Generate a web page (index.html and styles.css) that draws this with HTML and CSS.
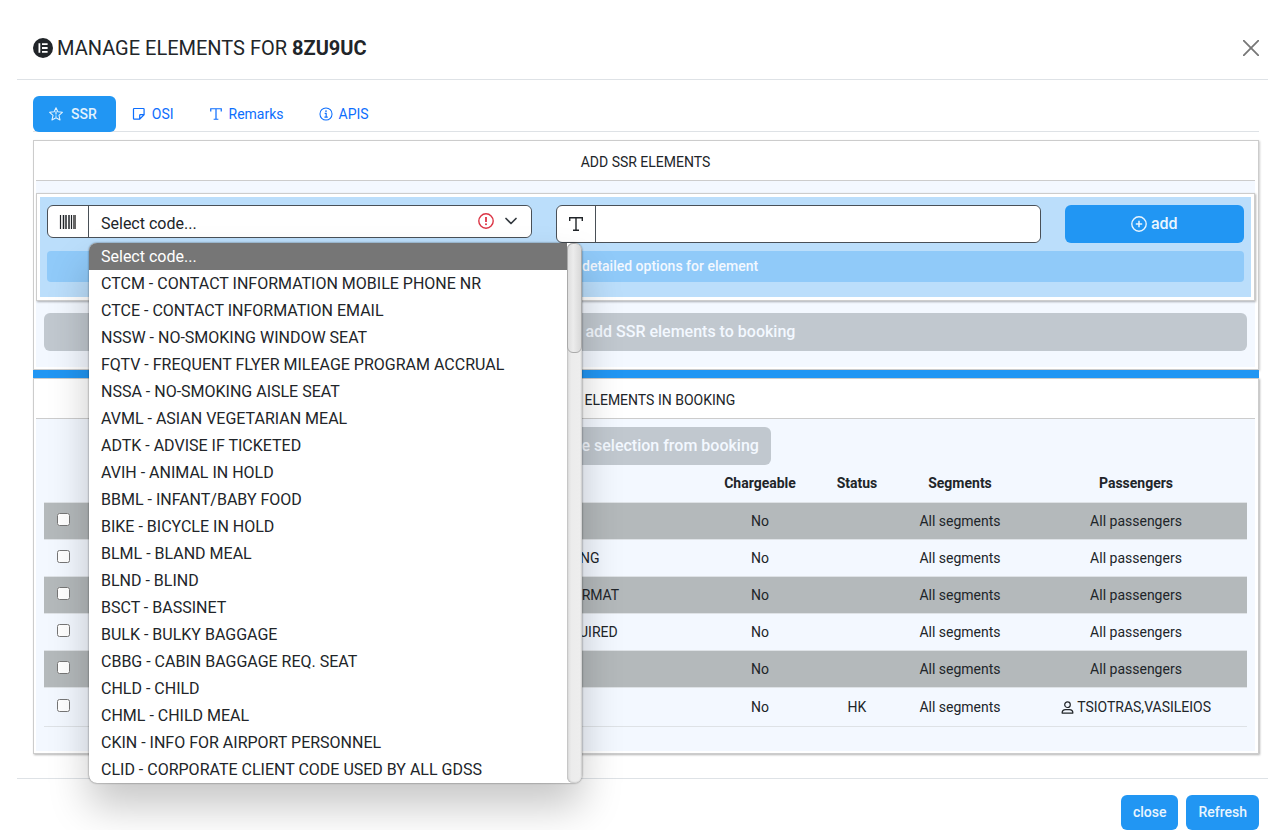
FILE: index.html
```
<!DOCTYPE html>
<html lang="en">
<head>
  <meta charset="UTF-8">
  <title>Manage elements</title>
  <link rel="stylesheet" href="styles.css">
</head>
<body>

  <div class="modal">
    <header class="modal-header">
      <h1 class="modal-title">
        <svg class="icon-title" viewBox="0 0 20 20"><circle cx="10" cy="10" r="10" fill="#212529"/><path d="M6.4 5.2v9.6M9 6.2h5.6M9 10h5.600M9 13.800h5.600" stroke="#fff" stroke-width="1.800" fill="none"/></svg>
        <span>MANAGE ELEMENTS FOR <b>8ZU9UC</b></span>
      </h1>
      <button class="btn-close" type="button" aria-label="Close">
        <svg viewBox="0 0 16 16"><path d="M.7.7l14.6 14.6M15.3.7L.7 15.3" stroke="#777" stroke-width="1.8" stroke-linecap="round"/></svg>
      </button>
    </header>

    <main class="modal-body">
      <nav class="tabs">
        <a class="tab active" href="#ssr">
          <svg class="icon" viewBox="0 0 16 16"><path d="M8 .8l2.100 4.700 5.200.6-3.900 3.500 1.200 5.200L8 12.200l-4.600 2.600 1.200-5.200L.7 6.100l5.200-.6z" fill="none" stroke="currentColor" stroke-width="1.200" stroke-linejoin="round"/><path d="M8 4.800v3.800M8 9.800v1.400" stroke="currentColor" stroke-width="1.400"/></svg>
          SSR
        </a>
        <a class="tab" href="#osi">
          <svg class="icon" viewBox="0 0 16 16"><path d="M2.500 1.700h10.500q.8 0 .8.800v6.300l-5 5H2.500q-.8 0-.8-.8V2.500q0-.8.800-.8zM8.800 13.800V9.600q0-.8.800-.8h4.200" fill="none" stroke="currentColor" stroke-width="1.400"/></svg>
          OSI
        </a>
        <a class="tab" href="#remarks">
          <svg class="icon" viewBox="0 0 16 16"><path d="M2 5V2h12v3M8 2v12M5.300 14h5.400" fill="none" stroke="currentColor" stroke-width="1.400"/></svg>
          Remarks
        </a>
        <a class="tab" href="#apis">
          <svg class="icon" viewBox="0 0 16 16"><circle cx="8" cy="8" r="6.900" fill="none" stroke="currentColor" stroke-width="1.200"/><circle cx="8" cy="4.700" r="1" fill="currentColor"/><path d="M6.500 7.300h1.700v4.300M6.200 11.600h3.800" fill="none" stroke="currentColor" stroke-width="1.300"/></svg>
          APIS
        </a>
      </nav>

      <section class="panel">
        <div class="panel-inner">
          <h2 class="panel-title">ADD SSR ELEMENTS</h2>

          <div class="add-box">
            <div class="add-form">
              <div class="group code-group">
                <label class="group-label" for="code" aria-label="Code">
                  <svg class="icon-code" viewBox="0 0 18 16"><path d="M1.500 1v14M12.500 1v14" stroke="#212529" stroke-width="1.200"/><path d="M4.500 1v14M7 1v14M10 1v14" stroke="#212529" stroke-width="1.500"/><path d="M15.500 1v14" stroke="#666" stroke-width="3"/></svg>
                </label>
                <select id="code" class="code-select">
                  <option>Select code...</option>
                </select>
                <span class="select-marks">
                  <svg class="icon-alert" viewBox="0 0 16 16"><circle cx="8" cy="8" r="7.200" fill="none" stroke="#dc3545" stroke-width="1.400"/><path d="M8 4v5" stroke="#dc3545" stroke-width="1.800"/><circle cx="8" cy="11.300" r="1" fill="#dc3545"/></svg>
                  <svg class="icon-arrow" viewBox="0 0 12 8"><path d="M1 1.500l5 5 5-5" fill="none" stroke="#343a40" stroke-width="1.700" stroke-linecap="round" stroke-linejoin="round"/></svg>
                </span>

                <!-- open list of codes -->
                <div class="menu">
                  <ul class="menu-list" role="listbox" aria-label="Codes">
                    <li class="selected" role="option" aria-selected="true">Select code...</li>
                    <li role="option">CTCM - CONTACT INFORMATION MOBILE PHONE NR</li>
                    <li role="option">CTCE - CONTACT INFORMATION EMAIL</li>
                    <li role="option">NSSW - NO-SMOKING WINDOW SEAT</li>
                    <li role="option">FQTV - FREQUENT FLYER MILEAGE PROGRAM ACCRUAL</li>
                    <li role="option">NSSA - NO-SMOKING AISLE SEAT</li>
                    <li role="option">AVML - ASIAN VEGETARIAN MEAL</li>
                    <li role="option">ADTK - ADVISE IF TICKETED</li>
                    <li role="option">AVIH - ANIMAL IN HOLD</li>
                    <li role="option">BBML - INFANT/BABY FOOD</li>
                    <li role="option">BIKE - BICYCLE IN HOLD</li>
                    <li role="option">BLML - BLAND MEAL</li>
                    <li role="option">BLND - BLIND</li>
                    <li role="option">BSCT - BASSINET</li>
                    <li role="option">BULK - BULKY BAGGAGE</li>
                    <li role="option">CBBG - CABIN BAGGAGE REQ. SEAT</li>
                    <li role="option">CHLD - CHILD</li>
                    <li role="option">CHML - CHILD MEAL</li>
                    <li role="option">CKIN - INFO FOR AIRPORT PERSONNEL</li>
                    <li role="option">CLID - CORPORATE CLIENT CODE USED BY ALL GDSS</li>
                  </ul>
                  <div class="menu-scroll"><div class="menu-thumb"></div></div>
                </div>
              </div>

              <div class="group">
                <label class="group-label" for="text" aria-label="Text">
                  <svg class="icon-text" viewBox="0 0 16 16"><path d="M1.700 5V1.800h12.600V5M8 1.800v12.400M5 14.200h6" fill="none" stroke="#212529" stroke-width="1.400"/></svg>
                </label>
                <input id="text" class="text-input" type="text">
              </div>

              <button class="btn add-btn" type="button">
                <svg class="icon-add" viewBox="0 0 16 16"><circle cx="8" cy="8" r="7.200" fill="none" stroke="currentColor" stroke-width="1.400"/><path d="M8 4.800v6.400M4.800 8h6.400" stroke="currentColor" stroke-width="1.500"/></svg>
                add
              </button>
            </div>
            <button class="btn options-btn" type="button" disabled>Display detailed options for element</button>
          </div>

          <button class="btn booking-btn" type="button" disabled>confirm and add SSR elements to booking</button>
        </div>
      </section>

      <section class="panel booking-panel">
        <div class="panel-inner">
          <h2 class="panel-title">SSR ELEMENTS IN BOOKING</h2>
          <button class="btn remove-btn" type="button" disabled>Remove selection from booking</button>
          <table class="elements">
            <thead>
              <tr>
                <th class="col-check"></th>
                <th class="col-code">Code</th>
                <th>Text</th>
                <th class="col-charge">Chargeable</th>
                <th class="col-status">Status</th>
                <th class="col-segments">Segments</th>
                <th class="col-passengers">Passengers</th>
              </tr>
            </thead>
            <tbody>
              <tr><td><input type="checkbox" aria-label="Select element 1"></td><td>OTHS</td><td>INFO</td><td>No</td><td></td><td>All segments</td><td>All passengers</td></tr>
              <tr><td><input type="checkbox" aria-label="Select element 2"></td><td>OTHS</td><td>SUBJECT TO CANCELLING</td><td>No</td><td></td><td>All segments</td><td>All passengers</td></tr>
              <tr><td><input type="checkbox" aria-label="Select element 3"></td><td>OTHS</td><td>CONTACT IN REQUIRED FORMAT</td><td>No</td><td></td><td>All segments</td><td>All passengers</td></tr>
              <tr><td><input type="checkbox" aria-label="Select element 4"></td><td>OTHS</td><td>PASSENGER DETAILS REQUIRED</td><td>No</td><td></td><td>All segments</td><td>All passengers</td></tr>
              <tr><td><input type="checkbox" aria-label="Select element 5"></td><td>OTHS</td><td>INFO</td><td>No</td><td></td><td>All segments</td><td>All passengers</td></tr>
              <tr>
                <td><input type="checkbox" aria-label="Select element 6"></td><td>CTCE</td><td>EMAIL</td><td>No</td><td>HK</td><td>All segments</td>
                <td><svg class="icon-user" viewBox="0 0 14 14"><circle cx="7" cy="4" r="3" fill="none" stroke="#212529" stroke-width="1.300"/><path d="M1.200 13q0-3.800 3.800-3.800h4q3.800 0 3.800 3.800z" fill="none" stroke="#212529" stroke-width="1.300" stroke-linejoin="round"/></svg> TSIOTRAS,VASILEIOS</td>
              </tr>
            </tbody>
          </table>
        </div>
      </section>
    </main>

    <footer class="modal-footer">
      <button class="btn btn-small" type="button">close</button>
      <button class="btn btn-small" type="button">Refresh</button>
    </footer>
  </div>

</body>
</html>
```
FILE: styles.css
```
* {
  box-sizing: border-box;
}

body {
  margin: 0;
  padding: 17px 0 0 17px;
  background: #fff;
  color: #212529;
  font-family: Roboto, "Liberation Sans", sans-serif;
  font-size: 14px;
  line-height: 21px;
}

h1, h2 {
  margin: 0;
  font-weight: 400;
}

svg {
  flex: none;
}

.modal-header {
  display: flex;
  align-items: center;
  justify-content: space-between;
  padding: 16px 9px 16px 16px;
  border-bottom: 1px solid #dee2e6;
}

.modal-title {
  display: flex;
  align-items: center;
  gap: 4px;
  font-size: 20px;
  line-height: 30px;
}

.modal-title b {
  font-weight: 700;
}

.icon-title {
  width: 20px;
  height: 20px;
}

.btn-close {
  display: flex;
  padding: 0;
  border: none;
  background: none;
  cursor: pointer;
}

.btn-close svg {
  width: 16px;
  height: 16px;
}

.modal-body {
  padding: 16px 9px 24px 16px;
}

/* tabs */
.tabs {
  display: flex;
  margin-bottom: 8px;
  box-shadow: inset 0 -1px #dee2e6;
}

.tab {
  display: flex;
  align-items: center;
  gap: 6px;
  padding: 8px 19px 8px 16px;
  border-radius: 6px;
  color: #0d6efd;
  line-height: 20px;
  text-decoration: none;
}

.tab.active {
  gap: 8px;
  background: #2196f3;
  color: #e3f2fd;
  font-weight: 500;
}

.icon {
  width: 14px;
  height: 14px;
}

/* panels */
.panel {
  padding: 2px 3px 2px 2px;
  border: 1px solid #ccc;
  box-shadow: 1px 1px 2px rgba(0, 0, 0, 0.2);
}

.panel-inner {
  padding-bottom: 16px;
  background: #f3f8ff;
}

.panel-title {
  padding: 9px 0 7px;
  border-bottom: 1px solid #ccc;
  background: #fff;
  font-size: 14px;
  line-height: 21px;
  text-align: center;
}

.booking-panel {
  margin-top: 8px;
  box-shadow: 0 -8px #2196f3, 1px 1px 2px rgba(0, 0, 0, 0.3);
}

.booking-panel .panel-inner {
  padding: 0 8px 24px;
}

.booking-panel .panel-title {
  margin: 0 -8px 8px;
}

.add-box {
  margin: 12px 0;
  padding: 11px 10px 18px;
  border: 1px solid #ccc;
  background: #bbdefb;
  box-shadow: inset 0 0 0 3px #fff, 1px 1px 2px rgba(0, 0, 0, 0.3);
}

.add-form {
  display: grid;
  grid-template-columns: repeat(12, 1fr);
  gap: 24px;
  align-items: start;
  margin-bottom: 8px;
}

.group {
  display: flex;
  grid-column: span 5;
  border: 1px solid #495057;
  border-radius: 6px;
  background: #fff;
}

.code-group {
  position: relative;
}

.group-label {
  display: flex;
  align-items: center;
  justify-content: center;
  width: 39px;
  border-right: 1px solid #495057;
}

.code-group .group-label {
  width: 41px;
}

.icon-code {
  width: 18px;
  height: 16px;
}

.icon-text {
  width: 16px;
  height: 16px;
}

.code-select,
.text-input {
  flex: 1;
  min-width: 0;
  height: 36px;
  padding: 4px 12px 0;
  border: none;
  border-radius: 6px;
  outline: none;
  background: #fff;
  color: #212529;
  font: 16px/24px Roboto, "Liberation Sans", sans-serif;
}

.code-select {
  height: 31px;
  appearance: none;
}

.select-marks {
  position: absolute;
  top: 7px;
  right: 14px;
  display: flex;
  align-items: center;
  gap: 11px;
  pointer-events: none;
}

.icon-alert {
  width: 16px;
  height: 16px;
}

.icon-arrow {
  width: 12px;
  height: 8px;
}

/* open code list */
.menu {
  position: absolute;
  z-index: 10;
  top: 37px;
  left: 41px;
  display: flex;
  width: 493px;
  overflow: hidden;
  border-radius: 8px;
  background: #fff;
  box-shadow: 0 0 2px rgba(0, 0, 0, 0.6), 0 24px 40px rgba(0, 0, 0, 0.22);
}

.menu-list {
  flex: 1;
  margin: 0;
  padding: 0;
  list-style: none;
  font-size: 16px;
  line-height: 27px;
}

.menu-list li {
  padding-left: 12px;
}

.menu-list .selected {
  background: #767676;
  color: #fff;
}

.menu-scroll {
  width: 15px;
  border-radius: 6px;
  background: linear-gradient(90deg, #dcdcdc, #ececec 30%, #eee);
  box-shadow: inset 0 0 2px #888;
}

.menu-thumb {
  height: 110px;
  border: 1px solid #aaa;
  border-radius: 6px;
  background: linear-gradient(90deg, #dedede, #ececec 40%, #d8d8d8);
}

/* buttons */
.btn {
  padding: 7px 12px;
  border: none;
  border-radius: 6px;
  background: #2196f3;
  color: #e9f5fe;
  font: 500 16px/24px Roboto, "Liberation Sans", sans-serif;
  cursor: pointer;
}

.btn:disabled {
  background: #c1c8cf;
  color: #f3f8ff;
  cursor: default;
}

.add-btn {
  display: flex;
  grid-column: span 2;
  align-items: center;
  justify-content: center;
  gap: 4px;
}

.icon-add {
  width: 16px;
  height: 16px;
}

.options-btn {
  display: block;
  width: 100%;
  padding: 5px 12px;
  border-radius: 4px;
  font-size: 14px;
  line-height: 21px;
}

.options-btn:disabled {
  background: #90caf9;
}

.booking-btn {
  display: block;
  width: calc(100% - 16px);
  margin: 0 8px;
}

.remove-btn {
  display: block;
  margin: 0 auto;
}

/* elements table */
.elements {
  width: 100%;
  border-spacing: 0;
  table-layout: fixed;
  text-align: center;
}

.elements th,
.elements td {
  height: 37px;
  padding: 0;
  box-shadow: inset 0 -1px #dee2e6;
}

.elements th {
  height: 38px;
  padding-bottom: 2px;
  font-weight: 700;
}

.elements tbody tr:nth-child(odd) {
  background: #b4b9bb;
}

.elements tr:last-child td {
  height: 39px;
}

.elements input {
  display: block;
  width: 13px;
  height: 13px;
  margin: 0 auto 4px;
}

.col-check {
  width: 39px;
}

.col-code {
  width: 248px;
}

.col-charge {
  width: 118px;
}

.col-status {
  width: 76px;
}

.col-segments {
  width: 130px;
}

.col-passengers {
  width: 222px;
}

.icon-user {
  width: 13px;
  height: 13px;
  vertical-align: -2px;
}

.modal-footer {
  display: flex;
  justify-content: flex-end;
  gap: 8px;
  padding: 16px 9px 0 0;
  border-top: 1px solid #dee2e6;
}

.btn-small {
  font-size: 14px;
  line-height: 21px;
}
```
